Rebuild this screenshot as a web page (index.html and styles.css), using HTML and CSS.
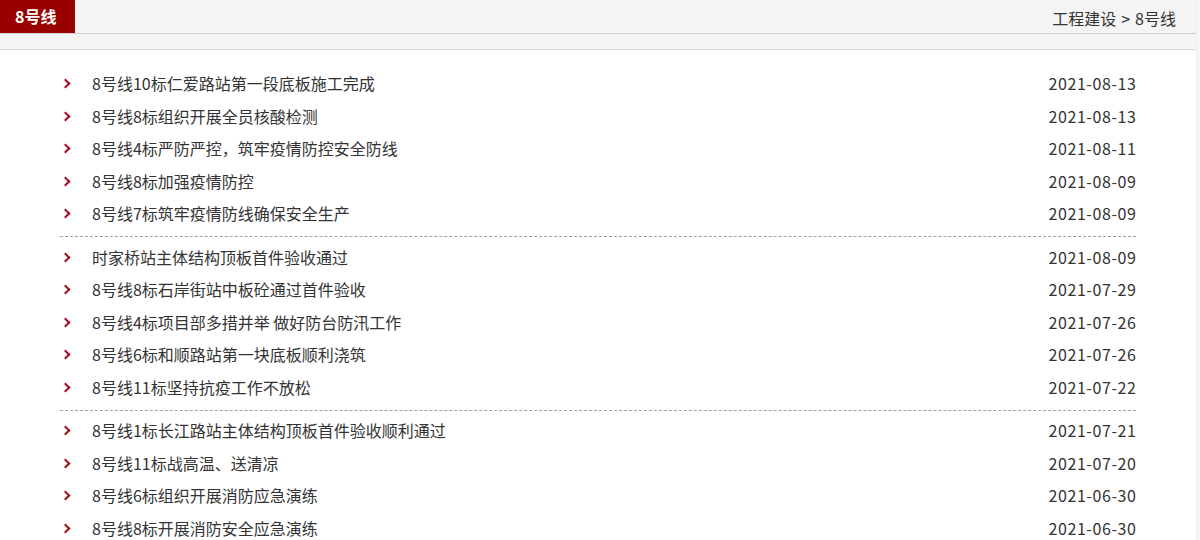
FILE: index.html
```html
<!DOCTYPE html>
<html lang="zh-CN">
<head>
<meta charset="utf-8">
<title>8号线</title>
<link rel="stylesheet" href="styles.css">
</head>
<body>
<div class="wrap">
  <div class="head">
    <div class="tab">8号线</div>
    <div class="crumb">工程建设<span class="sep">&gt;</span>8号线</div>
  </div>
  <div class="band"></div>
  <div class="content">
    <ul class="group">
      <li><span class="arr"></span><a class="title">8号线10标仁爱路站第一段底板施工完成</a><span class="date">2021-08-13</span></li>
      <li><span class="arr"></span><a class="title">8号线8标组织开展全员核酸检测</a><span class="date">2021-08-13</span></li>
      <li><span class="arr"></span><a class="title">8号线4标严防严控，筑牢疫情防控安全防线</a><span class="date">2021-08-11</span></li>
      <li><span class="arr"></span><a class="title">8号线8标加强疫情防控</a><span class="date">2021-08-09</span></li>
      <li><span class="arr"></span><a class="title">8号线7标筑牢疫情防线确保安全生产</a><span class="date">2021-08-09</span></li>
    </ul>
    <ul class="group">
      <li><span class="arr"></span><a class="title">时家桥站主体结构顶板首件验收通过</a><span class="date">2021-08-09</span></li>
      <li><span class="arr"></span><a class="title">8号线8标石岸街站中板砼通过首件验收</a><span class="date">2021-07-29</span></li>
      <li><span class="arr"></span><a class="title">8号线4标项目部多措并举 做好防台防汛工作</a><span class="date">2021-07-26</span></li>
      <li><span class="arr"></span><a class="title">8号线6标和顺路站第一块底板顺利浇筑</a><span class="date">2021-07-26</span></li>
      <li><span class="arr"></span><a class="title">8号线11标坚持抗疫工作不放松</a><span class="date">2021-07-22</span></li>
    </ul>
    <ul class="group">
      <li><span class="arr"></span><a class="title">8号线1标长江路站主体结构顶板首件验收顺利通过</a><span class="date">2021-07-21</span></li>
      <li><span class="arr"></span><a class="title">8号线11标战高温、送清凉</a><span class="date">2021-07-20</span></li>
      <li><span class="arr"></span><a class="title">8号线6标组织开展消防应急演练</a><span class="date">2021-06-30</span></li>
      <li><span class="arr"></span><a class="title">8号线8标开展消防安全应急演练</a><span class="date">2021-06-30</span></li>
    </ul>
  </div>
</div>
</body>
</html>
```

FILE: styles.css
```css
* { box-sizing: border-box; }
html, body { margin: 0; padding: 0; }
body {
  background: #f6f6f6;
  font-family: "Noto Sans CJK SC", "Microsoft YaHei", sans-serif;
  color: #333;
  height: 540px;
  overflow: hidden;
}
.wrap {
  width: 1197px;
  background: #fff;
  min-height: 540px;
  border-right: 1px solid #ececec;
}
.head {
  height: 34px;
  background: #f4f4f4;
  border-bottom: 1px solid #cfcfcf;
  display: flex;
  justify-content: space-between;
  align-items: stretch;
}
.tab {
  width: 75px;
  height: 33px;
  background: #990000;
  color: #fff;
  font-weight: bold;
  font-size: 16px;
  line-height: 33px;
  padding-left: 15px;
}
.crumb {
  font-size: 16px;
  line-height: 36px;
  padding-right: 20px;
  color: #333;
}
.sep {
  margin: 0 5px;
}
.band {
  height: 16px;
  background: #f4f4f4;
  border-bottom: 1px solid #d6d6d6;
}
.content {
  padding: 17px 60px 0 60px;
}
.group {
  list-style: none;
  margin: 0 0 3.5px 0;
  padding: 0 0 6.5px 0;
  border-bottom: 1px dashed #a0a0a0;
}
.group li {
  height: 32.5px;
  display: flex;
  align-items: center;
  font-size: 16px;
}
.arr {
  width: 32px;
  height: 32px;
  position: relative;
  flex: none;
}
.arr::before {
  content: "";
  position: absolute;
  left: 2px;
  top: 13px;
  width: 5px;
  height: 5px;
  border-top: 2px solid #a50f1c;
  border-right: 2px solid #a50f1c;
  transform: rotate(45deg);
}
.title {
  flex: 1;
  color: #333;
  text-decoration: none;
  white-space: nowrap;
}
.date {
  color: #333;
  letter-spacing: 0.6px;
  margin-right: -0.6px;
}
```
